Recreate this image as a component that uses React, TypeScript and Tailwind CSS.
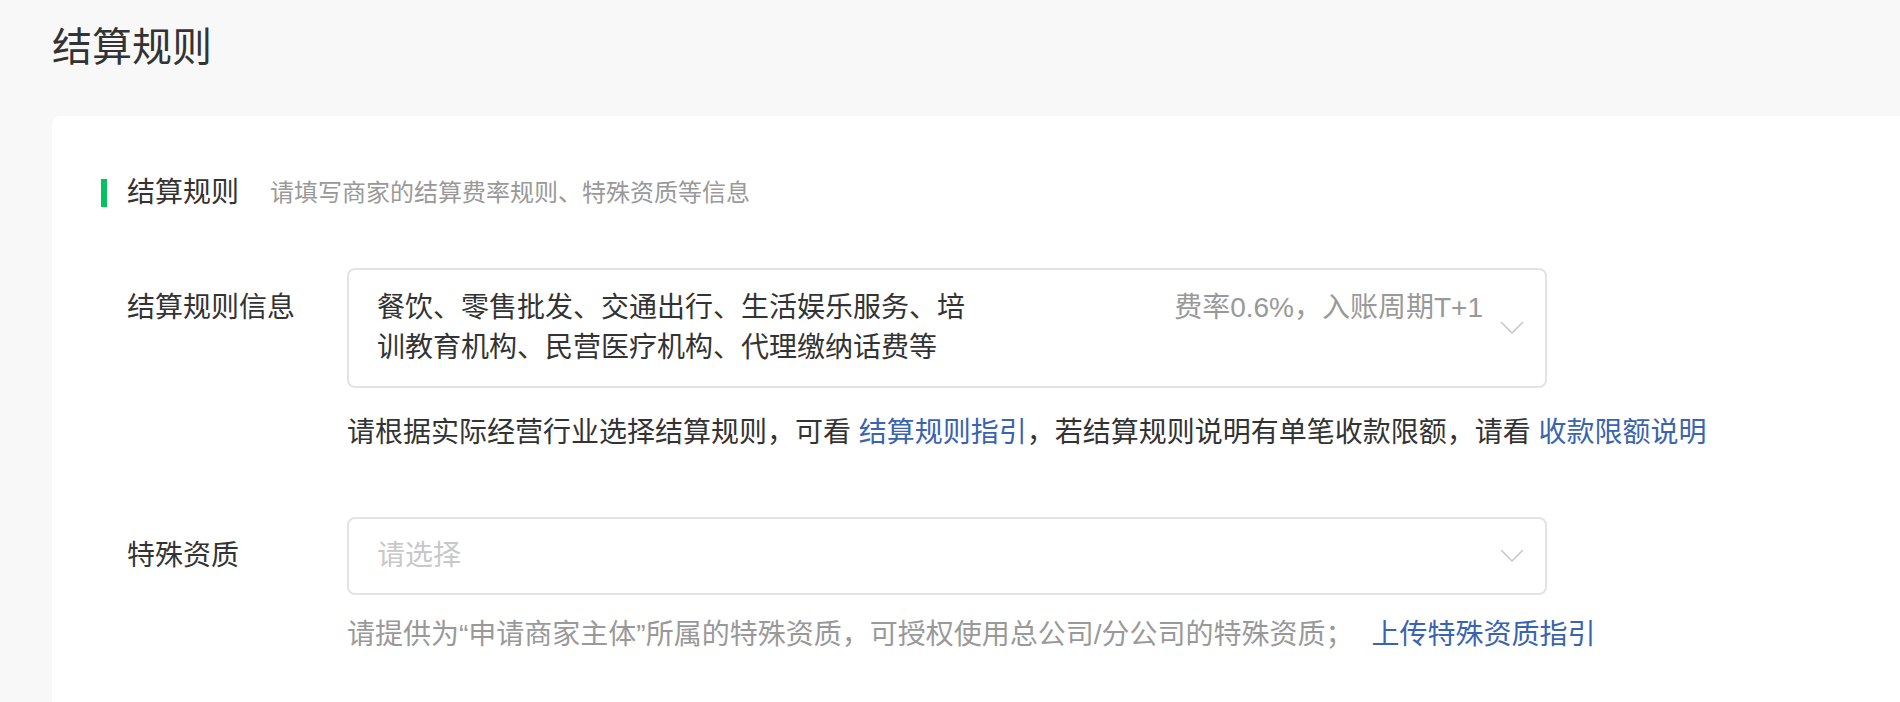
import React from "react";

const Chevron = () => (
  <svg width="24" height="14" viewBox="0 0 24 14" fill="none" className="shrink-0">
    <polyline points="1.5,1.5 12,12 22.5,1.5" stroke="#c8c8c8" strokeWidth="1.6" strokeLinecap="round" strokeLinejoin="round" />
  </svg>
);

export default function App() {
  return (
    <div
      className="min-h-screen w-full overflow-hidden bg-[#f8f8f8] text-[#333333]"
      style={{ fontFamily: '"Liberation Sans", "Noto Sans CJK SC", sans-serif' }}
    >
      <div className="pl-[52px] pt-[27px]">
        <h1 className="text-[40px] leading-[40px] font-normal text-[#333333]">结算规则</h1>
      </div>
      <div className="ml-[52px] mt-[49px] rounded-l-[8px] bg-white pl-[49px] pt-[63px] pb-[80px]">
        <div className="flex items-center">
          <div className="h-[28px] w-[6px] bg-[#07c160]" />
          <div className="ml-[20px] text-[28px] leading-[28px] text-[#333333]">结算规则</div>
          <div className="ml-[31px] text-[24px] leading-[28px] text-[#999999]">请填写商家的结算费率规则、特殊资质等信息</div>
        </div>

        <div className="mt-[61px] flex items-start pl-[26px]">
          <div className="w-[220px] shrink-0 pt-[20px] text-[28px] leading-[40px]">结算规则信息</div>
          <div className="flex flex-col">
            <div className="flex w-[1200px] items-center rounded-[8px] border-2 border-[#e3e3e3] pl-[28px] pr-[21px] pt-[18px] pb-[18px]">
              <div className="flex flex-1 items-start justify-between">
                <div className="w-[600px] text-[28px] leading-[40px] text-[#333333]">
                  餐饮、零售批发、交通出行、生活娱乐服务、培训教育机构、民营医疗机构、代理缴纳话费等
                </div>
                <div className="text-[28px] leading-[40px] text-[#999999]">费率0.6%，入账周期T+1</div>
              </div>
              <div className="ml-[17px]">
                <Chevron />
              </div>
            </div>
            <div className="mt-[25px] whitespace-nowrap text-[28px] leading-[40px] text-[#333333]">
              请根据实际经营行业选择结算规则，可看 <span className="text-[#3a63b0]">结算规则指引</span>，若结算规则说明有单笔收款限额，请看 <span className="text-[#3a63b0]">收款限额说明</span>
            </div>
          </div>
        </div>

        <div className="mt-[64px] flex items-start pl-[26px]">
          <div className="w-[220px] shrink-0 pt-[19px] text-[28px] leading-[40px]">特殊资质</div>
          <div className="flex flex-col">
            <div className="flex h-[78px] w-[1200px] items-center rounded-[8px] border-2 border-[#e3e3e3] pl-[28px] pr-[21px]">
              <div className="flex-1 text-[28px] leading-[40px] text-[#c8c8c8]">请选择</div>
              <Chevron />
            </div>
            <div className="mt-[20px] whitespace-nowrap text-[28px] leading-[40px] text-[#999999]">
              请提供为“申请商家主体”所属的特殊资质，可授权使用总公司/分公司的特殊资质；<span className="ml-[18px] text-[#3a63b0]">上传特殊资质指引</span>
            </div>
          </div>
        </div>
      </div>
    </div>
  );
}
